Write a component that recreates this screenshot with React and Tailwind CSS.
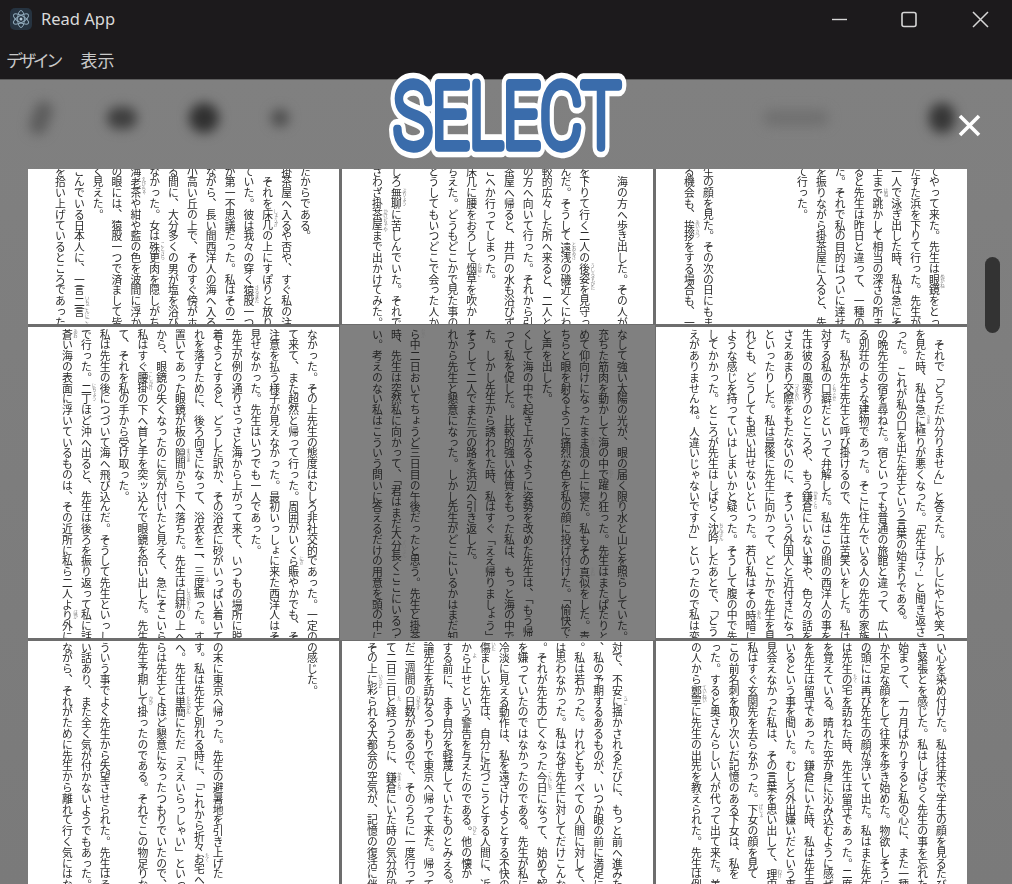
import { Fragment } from "react";

const SANS = "font-['Noto_Sans','Noto_Sans_CJK_JP',sans-serif]";

// ページの各コマ。行は右から左へ流れる。「漢字|かな|」はルビ
const panels = [
  {
    pad: "pr-[25.6px]",
    lift: "-mt-[3px]",
    lines: [
      "たからである。",
      "掛茶屋へ入るや否や、すぐ私の注",
      "　それを床几|しょうぎ|の上にすぽりと放り",
      "ていた。彼は我々の穿く猿股|さるまた|一つ見",
      "が第一不思議だった。私はその二",
      "ながら、長い間西洋人の海へ入る",
      "小高い丘の上で、そのすぐ傍がホ",
      "る間に、大分多くの男が塩を浴び",
      "なかった。女は殊更|ことさら|肉を隠しがち",
      "海老茶|えびちゃ|や紺や藍の色を波間に浮か",
      "の眼には、猿股一つで済まして皆",
      "く見えた。",
      "ごんでいる日本人に、一言二言|いちごんにごん|",
      "を拾い上げているところであった",
    ],
  },
  {
    pad: "pr-[22.6px]",
    lift: "-mt-[3px]",
    lines: [
      "　海の方へ歩き出した。その人がし",
      "　",
      "を下りて行く二人の後姿|うしろすがた|を見守っていた",
      "んだ。そうして遠浅|とおあさ|の磯近くにわた",
      "較的広々した所へ来ると、二人とも",
      "の方へ向いて行った。それから引く",
      "茶屋へ帰ると、井戸の水も浴びずに",
      "こへか行ってしまった。",
      "床几に腰をおろして烟草|たばこ|を吹かしてい",
      "ちえた。どうもどこかで見た事のあ",
      "どうしてもいつどこで会った人か",
      "　",
      "しろ無聊|ぶりょう|に苦しんでいた。それで翌",
      "さわざ掛茶屋|かけぢゃや|まで出かけてみた。",
    ],
  },
  {
    pad: "pr-[24.6px]",
    lift: "-mt-[3px]",
    lines: [
      "てやって来た。先生は眼鏡|めがね|をとっ",
      "たすた浜を下りて行った。先生がまた",
      "一人で泳ぎ出した時、私は急にそっ",
      "上まで跳|はね|かして相当の深さの所まで",
      "ると先生は昨日と違って、一種の",
      "た。それで私の目的はついに達せ",
      "を振りながら掛茶屋に入ると、先",
      "て行った。",
      "　",
      "　",
      "　",
      "　",
      "生の顔を見た。その次の日にもま",
      "る機会も、挨拶|あいさつ|をする場合も、一",
    ],
  },
  {
    pad: "pr-[18.6px]",
    lift: "mt-[2px]",
    lines: [
      "なかった。その上先生の態度はむしろ非社交的であった。一定の習",
      "て来て、また超然と帰って行った。周囲がいくら賑|にぎ|やかでも、そ",
      "注意を払う様子が見えなかった。最初いっしょに来た西洋人はそ",
      "見せなかった。先生はいつでも一人であった。",
      "先生が例の通りさっさと海から上がって来て、いつもの場所に脱",
      "着ようとすると、どうした訳か、その浴衣に砂がいっぱい着いていた",
      "れを落すために、後ろ向きになって、浴衣を二、三度振|ふ|った。する",
      "置いてあった眼鏡が板の隙間|すきま|から下へ落ちた。先生は白絣|しろがすり|の上へ",
      "から、眼鏡の失くなったのに気が付いたと見えて、急にそこいらを",
      "私はすぐ腰掛|こしかけ|の下へ首と手を突ッ込んで眼鏡を拾い出した。先生",
      "て、それを私の手から受け取った。",
      "私は先生の後につづいて海へ飛び込んだ。そうして先生といっしょ",
      "で行った。二丁|にちょう|ほど沖へ出ると、先生は後ろを振り返って私に話し",
      "蒼|あお|い海の表面に浮いているものは、その近所に私ら二人より外|ほか|にな",
    ],
  },
  {
    pad: "pr-[22.6px]",
    lift: "mt-[2px]",
    selected: true,
    lines: [
      "なして強い太陽の光が、眼の届く限り水と山とを照らしていた。私",
      "充ちた筋肉を動かして海の中で躍|おど|り狂った。先生はまたぱたりと、",
      "めて仰向けになったまま浪|なみ|の上に寝た。私もその真似|まね|をした。青",
      "ちらと眼を射るように痛烈な色を私の顔に投げ付けた。「愉快です",
      "と声を出した。",
      "くして海の中で起き上がるように姿勢を改めた先生は、「もう帰",
      "って私を促した。比較的強い体質をもった私は、もっと海の中で",
      "た。しかし先生から誘われた時、私はすぐ「ええ帰りましょう」",
      "そうして二人でまた元の路|みち|を浜辺へ引き返した。",
      "れから先生と懇意になった。しかし先生がどこにいるかはまだ知",
      "　",
      "ら中|なか|二日おいてちょうど三日目の午後だったと思う。先生と掛茶",
      "時、先生は突然私に向かって、「君はまだ大分長|ずいぶん|くここにいるつも",
      "い。考えのない私はこういう問いに答えるだけの用意を頭の中に蓄",
    ],
  },
  {
    pad: "pr-[19.6px]",
    lift: "mt-[2px]",
    lines: [
      "　それで「どうだか分りません」と答えた。しかしにやにや笑って",
      "を見た時、私は急に極|きま|りが悪くなった。「先生は？」と聞き返さ",
      "った。　これが私の口を出た先生という言葉の始まりである。",
      "の晩先生の宿を尋ねた。宿といっても普通の旅館と違って、広い",
      "る別荘のような建物であった。そこに住んでいる人の先生の家族",
      "た。私が先生先生と呼び掛けるので、先生は苦笑いをした。私は先",
      "対する私の口癖|くちぐせ|だといって弁解した。私はこの間の西洋人の事を",
      "生は彼の風変りのところや、もう鎌倉|かまくら|にいない事や、色々の話を",
      "さえあまり交際|つきあい|をもたないのに、そういう外国人と近付きになっ",
      "といったりした。私は最後に先生に向かって、どこかで先生を見",
      "れども、どうしても思い出せないといった。若い私はその時暗|あん|に",
      "ような感じを持っていはしまいかと疑った。そうして腹の中で先",
      "してかかった。ところが先生はしばらく沈吟|ちんぎん|したあとで、「どう",
      "えがありませんね。人違いじゃないですか」といったので私は変",
    ],
  },
  {
    pad: "pr-[18.6px]",
    lift: "mt-[1px]",
    lines: [
      "の感じた。",
      "　",
      "　",
      "　",
      "　",
      "の末に東京へ帰った。先生の避暑地を引き上げた",
      "す。私は先生と別れる時に、「これから折々お宅|たく|へ伺",
      "へ。先生は単簡|たんかん|にただ「ええいらっしゃい」といっ",
      "らは先生とよほど懇意になったつもりでいたので、先",
      "先生予期して掛|かか|ったのである。それでこの物足りない",
      "　",
      "ういう事でよく先生から失望させられた。先生はそ",
      "い話あり、また全く気が付かないようでもあった。私は",
      "ながら、それがために先生から離れて行く気にはなれ",
    ],
  },
  {
    pad: "pr-[27.6px]",
    lift: "mt-[1px]",
    lines: [
      "対で、不安に揺|うご|かされるたびに、もっと前へ進みた",
      "、私の予期するあるものが、いつか眼の前に満足に",
      "。私は若かった。けれどもすべての人間に対して、",
      "は思わなかった。私はなぜ先生に対してだけこんな",
      "。それが先生の亡くなった今日|こんにち|になって、始めて解",
      "を嫌っていたのではなかったのである。先生が私に",
      "冷淡に見える動作は、私を遠ざけようとする不快の",
      "傷|いた|ましい先生は、自分に近づこうとする人間に、近",
      "から止|よ|せという警告を与えたのである。他|ひと|の懐か",
      "する前に、まず自分を軽蔑していたものとみえる。",
      "論先生を訪ねるつもりで東京へ帰って来た。帰って",
      "だ二週間の日数|ひかず|があるので、そのうちに一度行って",
      "て二日三日と経|た|つうちに、鎌倉|かまくら|にいた時の気分が段",
      "その上に彩|いろど|られる大都会の空気が、記憶の復活に伴",
    ],
  },
  {
    pad: "pr-[17.6px]",
    lift: "mt-[1px]",
    lines: [
      "い心を染め付けた。私は往来で学生の顔を見るたびに",
      "き緊張とを感じた。私はしばらく先生の事を忘れた。",
      "始まって、一カ月ばかりすると私の心に、また一種",
      "か不足な顔をして往来を歩き始めた。物欲しそうに",
      "の頭には再び先生の顔が浮いて出た。私はまた先生",
      "は先生の宅|たく|を訪ねた時、先生は留守であった。二度",
      "を覚えている。晴れた空が身に沁み込むように感ぜられ",
      "を先生は留守であった。鎌倉にいた時、私は先生自身",
      "いるという事を聞いた。むしろ外出嫌いだという事",
      "見会えなかった私は、その言葉を思い出して、理由|わけ|も",
      "私はすぐ玄関先を去らなかった。下女|げじょ|の顔を見て",
      "この前名刺を取り次いだ記憶のある下女は、私を",
      "った。すると奥さんらしい人が代って出て来た。美",
      "の人から鄭寧|ていねい|に先生の出先を教えられた。先生は例",
    ],
  },
];

function Line({ text }) {
  const parts = text.split(/([^|]{1,2}\|[^|]+\|)/).filter(Boolean);
  return (
    <div className="whitespace-pre">
      {parts.map((part, i) => {
        const m = part.match(/^(.+)\|(.+)\|$/);
        if (!m) return <Fragment key={i}>{part}</Fragment>;
        // ルビは行間に載せるだけで行送りを変えない
        return (
          <span key={i} className="relative">
            {m[1]}
            <span className="absolute left-[calc(100%-1.5px)] top-0 text-[4.5px] leading-none text-[#777]">{m[2]}</span>
          </span>
        );
      })}
    </div>
  );
}

function Panel({ panel }) {
  return (
    <div
      className={`[writing-mode:vertical-rl] overflow-hidden h-full w-[311px] text-[10.8px] leading-[18.85px] blur-[0.35px] ${panel.pad} ${
        panel.selected
          ? "bg-[#808080] text-[#222] outline-2 outline-[#808080]"
          : "bg-white text-[#2a2a2a]"
      }`}
    >
      <div className={panel.lift}>
        {panel.lines.map((line, i) => (
          <Line key={i} text={line} />
        ))}
      </div>
    </div>
  );
}

function AppIcon() {
  return (
    <svg width="24" height="24" viewBox="0 0 24 24" fill="none">
      <rect x="1" y="1" width="22" height="22" rx="5" fill="#263340" />
      <g stroke="#8fa9ba" strokeWidth="1">
        <ellipse cx="12" cy="12" rx="8.5" ry="3.4" transform="rotate(30 12 12)" />
        <ellipse cx="12" cy="12" rx="8.5" ry="3.4" transform="rotate(-30 12 12)" />
        <ellipse cx="12" cy="12" rx="8.5" ry="3.4" transform="rotate(90 12 12)" />
      </g>
      <circle cx="12" cy="12" r="1.5" fill="#b5cad8" />
    </svg>
  );
}

function TitleBar() {
  return (
    <div className="h-[38px] flex items-center text-[#d9d9d9]">
      <div className="ml-[9px] mr-[8px]">
        <AppIcon />
      </div>
      <span className="text-[16.5px]">Read App</span>
      <svg width="172" height="24" viewBox="0 0 172 24" fill="none" stroke="#d6d6d6" className="ml-auto mr-[8px]">
        <path d="M0 12.5h15" strokeWidth="1.4" />
        <rect x="70" y="5.5" width="14" height="14" rx="2" strokeWidth="1.6" />
        <path d="M141 5l15 15M156 5l-15 15" strokeWidth="1.5" />
      </svg>
    </div>
  );
}

function MenuBar() {
  return (
    <div className="h-[42px] flex items-center gap-[21px] pl-[6px] pt-[5px] text-[17px] text-[#c9c9c9] border-b border-[#5c5c5c]">
      <span className="tracking-[-3.6px]">デザイン</span>
      <span>表示</span>
    </div>
  );
}

// ダイアログの背後でぼけているツールバー
function BlurredToolbar() {
  return (
    <div className="h-[89px] flex items-center pb-[14px] pl-[32px] pr-[57px] blur-[6px]">
      <div className="w-[18px] h-[34px] rotate-[20deg] bg-[#5c5c5c] rounded-full" />
      <div className="ml-[57px] w-[30px] h-[22px] bg-[#3e3e3e] rounded-full" />
      <div className="ml-[52px] w-[30px] h-[30px] bg-[#303030] rounded-full" />
      <div className="ml-[52px] w-[18px] h-[18px] bg-[#4c4c4c] rounded-full" />
      <div className="ml-auto w-[66px] h-[16px] bg-[#707070] rounded-full" />
      <div className="ml-[100px] w-[26px] h-[30px] bg-[#363636] rounded-full" />
    </div>
  );
}

function SelectTitle() {
  const common = {
    x: 110,
    y: 69,
    textAnchor: "middle",
    textLength: 208,
    lengthAdjust: "spacingAndGlyphs",
    fontFamily: "Roboto, sans-serif",
    fontWeight: 100,
    fontSize: 82,
    strokeLinejoin: "round",
    strokeLinecap: "round",
  };
  return (
    <svg width="240" height="90" viewBox="0 0 220 82" className="absolute left-[387px] top-[71px]" style={{ overflow: "visible" }}>
      <text {...common} fill="#fff" stroke="#fff" strokeWidth="19">SELECT</text>
      <text {...common} fill="#3a6cab" stroke="#3a6cab" strokeWidth="8.5">SELECT</text>
    </svg>
  );
}

export default function App() {
  return (
    <div className={`relative w-[1012px] h-[884px] overflow-hidden bg-[#797979] ${SANS}`}>
      <div className="bg-[#1c1a1c]">
        <TitleBar />
        <MenuBar />
      </div>

      <div className="bg-[linear-gradient(#808080,#7a7a7a)]">
        <BlurredToolbar />
        <div className="ml-[28px] w-[939px] grid grid-cols-[311px_311px_311px] grid-rows-[155px_311px_243px] gap-[3px] bg-[#6d6d6d]">
          {panels.map((panel, i) => (
            <Panel key={i} panel={panel} />
          ))}
        </div>
      </div>

      <SelectTitle />

      {/* 閉じるボタン */}
      <svg width="23" height="23" viewBox="0 0 23 23" className="absolute left-[958px] top-[114px]" stroke="#fff" strokeWidth="3.6">
        <path d="M2 2l19 19M21 2L2 21" />
      </svg>

      {/* スクロールバー */}
      <div className="absolute left-[985px] top-[257px] w-[15px] h-[76px] rounded-full bg-[#333]" />
    </div>
  );
}
